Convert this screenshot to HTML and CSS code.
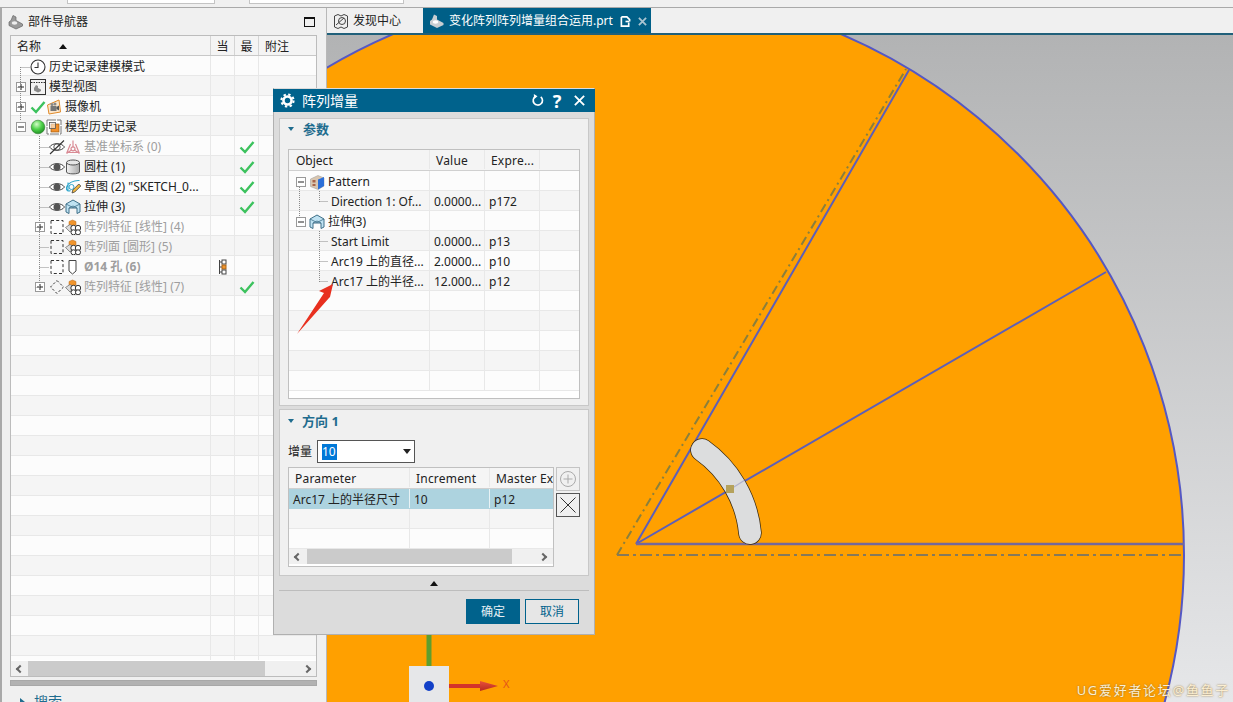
FILE: index.html
```html
<!DOCTYPE html>
<html lang="zh">
<head>
<meta charset="utf-8">
<title>阵列增量</title>
<link rel="stylesheet" href="styles.css">
</head>
<body>
<svg class="defs" width="0" height="0" aria-hidden="true">
  <symbol id="i-part" viewBox="0 0 16 16">
    <path d="M5 1.500 8 3v3.500l6.500 3.500v2L8 15 1 11.500V8l2-1.500z" fill="#9a9a9a" stroke="#666" stroke-width=".7"/>
    <ellipse cx="6.500" cy="9" rx="2.800" ry="1.800" fill="#eee"/>
  </symbol>
  <symbol id="i-clock" viewBox="0 0 16 16">
    <circle cx="8" cy="8" r="7" fill="#fff" stroke="#333" stroke-width="1.100"/>
    <path d="M8 3.500V8.500H4.500" fill="none" stroke="#333" stroke-width="1.100"/>
  </symbol>
  <symbol id="i-view" viewBox="0 0 16 16">
    <rect x=".5" y=".5" width="15" height="15" fill="#f2f2f2" stroke="#333"/>
    <path d="M1 3.500h14" stroke="#333" stroke-dasharray="1.500 1"/>
    <path d="M6 6 8 7v2l3 1.500v1.500l-3 1.500-4-2V9z" fill="#8a8a8a"/>
  </symbol>
  <symbol id="i-check" viewBox="0 0 16 16">
    <path d="M1.500 8.500 6 13 14.500 3" fill="none" stroke="#3cc25e" stroke-width="2.400"/>
  </symbol>
  <symbol id="i-camera" viewBox="0 0 16 16">
    <path d="M1.500 6 13 1l1.500 12L3 15z" fill="#fbe7cd" stroke="#e08a2a"/>
    <rect x="4.500" y="7" width="6" height="5" fill="#777"/>
    <path d="M10.500 8 13 6.500v5L10.500 10z" fill="#555"/>
    <circle cx="6" cy="5.500" r="1.500" fill="#888"/><circle cx="9" cy="5" r="1.500" fill="#888"/>
  </symbol>
  <symbol id="i-ball" viewBox="0 0 16 16">
    <defs><radialGradient id="g-ball" cx=".4" cy=".3" r=".75"><stop offset="0" stop-color="#d4fbc8"/><stop offset=".5" stop-color="#4fd24a"/><stop offset="1" stop-color="#1d8a22"/></radialGradient></defs>
    <circle cx="8" cy="8" r="6.800" fill="url(#g-ball)" stroke="#2a7a2a" stroke-width=".6"/>
  </symbol>
  <symbol id="i-group" viewBox="0 0 16 16">
    <rect x="1" y="1" width="14" height="14" fill="#fff" stroke="#777" stroke-dasharray="9 1"/>
    <rect x="5" y="5" width="8" height="8" fill="#f2902a" stroke="#9a5a12" stroke-width=".7"/>
    <rect x="3.500" y="3.500" width="6" height="6" fill="#fff" fill-opacity=".55" stroke="#555" stroke-width=".8"/>
  </symbol>
  <symbol id="i-eye" viewBox="0 0 16 16">
    <path d="M.5 8C3.500 3.500 12.500 3.500 15.500 8 12.500 12.500 3.500 12.500.5 8z" fill="#fff" stroke="#444"/>
    <circle cx="8" cy="8" r="3.500" fill="#555"/>
  </symbol>
  <symbol id="i-eye-off" viewBox="0 0 16 16">
    <path d="M.5 8C3.500 3.500 12.500 3.500 15.500 8 12.500 12.500 3.500 12.500.5 8z" fill="#fff" stroke="#444"/>
    <circle cx="8" cy="8" r="3.200" fill="none" stroke="#555"/>
    <path d="M1 15 15 1.500" stroke="#333" stroke-width="1.100"/>
  </symbol>
  <symbol id="i-csys" viewBox="0 0 16 16">
    <g fill="none" stroke="#d98a94" stroke-width="1.200">
      <path d="M8 1.500v7M6.500 11 1.500 14.500M9.500 11l5 3.500M5.500 5 2 13.500h12L10.500 5"/>
      <circle cx="8" cy="9.800" r="2"/>
    </g>
  </symbol>
  <symbol id="i-cyl" viewBox="0 0 16 16">
    <defs><linearGradient id="g-cyl" x1="0" x2="1" y1="0" y2="0"><stop offset="0" stop-color="#f3f3f3"/><stop offset="1" stop-color="#a9a9a9"/></linearGradient></defs>
    <path d="M1.500 3.500v9.500c0 2.500 13 2.500 13 0V3.500z" fill="url(#g-cyl)" stroke="#555"/>
    <ellipse cx="8" cy="3.500" rx="6.500" ry="2.500" fill="#e6e6e6" stroke="#555"/>
  </symbol>
  <symbol id="i-sketch" viewBox="0 0 16 16">
    <path d="M14.500 1.500C9 1 2.500 4 1.500 8.500c-.5 2.500 2 4.500 4 3M3 3.500v9" fill="none" stroke="#30a6cc" stroke-width="1.100"/>
    <circle cx="6.500" cy="8" r="2.500" fill="none" stroke="#30a6cc"/>
    <path d="m7 14 .8-3 6-6 2 2-6 6z" fill="#f0b640" stroke="#444" stroke-width=".8"/>
  </symbol>
  <symbol id="i-extrude" viewBox="0 0 16 16">
    <path d="M8 1 15 5v8l-3 1.500V9H4v5.500L1 13V5z" fill="#bfe2f2" stroke="#3e6f88"/>
    <path d="M1 5l7 3.500L15 5M4 9l4-2 4 2" fill="none" stroke="#3e6f88" stroke-width=".8"/>
  </symbol>
  <symbol id="i-dashed" viewBox="0 0 16 16">
    <rect x="2" y="1.500" width="12" height="13" fill="none" stroke="#333" stroke-dasharray="3 2.200"/>
  </symbol>
  <symbol id="i-dashed-c" viewBox="0 0 16 16">
    <path d="M8 1.500 14.500 8 8 14.500 1.500 8z" fill="none" stroke="#333" stroke-dasharray="2.500 2"/>
  </symbol>
  <symbol id="i-pattern" viewBox="0 0 16 16">
    <path d="M4 2.500 7.500 1 11 2.500V6L7.500 8 4 6z" fill="#f0952e" stroke="#b86a18" stroke-width=".5"/>
    <path d="M.5 8.500 5 5.500 9 8 5 13z" fill="#dcdcdc" stroke="#666" stroke-width=".7"/>
    <g fill="#fff" stroke="#333" stroke-width="1">
      <circle cx="8.500" cy="9" r="2.700"/><circle cx="13" cy="9" r="2.700"/><circle cx="8.500" cy="13.300" r="2.500"/><circle cx="13" cy="13.300" r="2.500"/>
    </g>
  </symbol>
  <symbol id="i-hole" viewBox="0 0 16 16">
    <path d="M4 1.500h7V12l-3.500 3L4 12z" fill="#fff" stroke="#444"/>
  </symbol>
  <symbol id="i-dep" viewBox="0 0 16 16">
    <path d="M4.500 1v14M4.500 3h3M4.500 8h3M4.500 13h3" fill="none" stroke="#444"/>
    <rect x="7" y="1" width="4" height="4" fill="#fff" stroke="#444"/>
    <rect x="7" y="6" width="4" height="4" fill="#f0952e" stroke="#a8641a"/>
    <rect x="7" y="11" width="4" height="4" fill="#fff" stroke="#444"/>
  </symbol>
  <symbol id="i-pat-block" viewBox="0 0 16 16">
    <path d="M1.500 5 9 1.500 15 4v8l-6 3.500-7.500-3z" fill="#d9c6b0" stroke="#999" stroke-width=".5"/>
    <path d="M9 5.500 15 3v9l-6 3.500z" fill="#2c6fd8"/>
    <path d="M3.500 6h3v2.500h-3zM3.500 10h3v2h-3z" fill="#a8644a"/>
  </symbol>
  <symbol id="i-plus" viewBox="0 0 10 10">
    <rect x=".5" y=".5" width="9" height="9" fill="#fff" stroke="#999"/>
    <path d="M2 5h6M5 2v6" stroke="#222"/>
  </symbol>
  <symbol id="i-minus" viewBox="0 0 10 10">
    <rect x=".5" y=".5" width="9" height="9" fill="#fff" stroke="#999"/>
    <path d="M2 5h6" stroke="#222"/>
  </symbol>
</svg>

<div class="app">
  <div class="top-strip">
    <div class="top-field"></div>
    <div class="top-field wide"></div>
  </div>

  <div class="work">
    <aside class="panel">
      <header class="panel-head">
        <svg class="ic-head"><use href="#i-part"/></svg>
        <span class="panel-title">部件导航器</span>
        <span class="maximize"></span>
      </header>

      <div class="nav-table">
        <svg class="tree-lines" width="60" height="300" viewBox="0 0 60 300">
          <path d="M9.500 31V85M9.500 31.500H19M9.500 51.500H6M9.500 71.500H6M28.500 100V252M28.500 111.500H38M28.500 131.500H38M28.500 151.500H38M28.500 171.500H38M28.500 191.500H24M28.500 211.500H38M28.500 231.500H38M28.500 251.500H24" fill="none" stroke="#8a8a8a" stroke-dasharray="1 1"/>
        </svg>
        <div class="nav-row nav-header">
          <div class="cell name head-cell">名称<span class="sort"></span></div>
          <div class="cell head-cell center">当</div>
          <div class="cell head-cell center">最</div>
          <div class="cell head-cell note">附注</div>
        </div>
        <div class="nav-body">
          <div class="nav-row"><div class="cell name p19"><svg class="ic"><use href="#i-clock"/></svg><span class="txt">历史记录建模模式</span></div><div class="cell"></div><div class="cell"></div><div class="cell"></div></div>
          <div class="nav-row"><div class="cell name p5"><svg class="exp"><use href="#i-plus"/></svg><svg class="ic"><use href="#i-view"/></svg><span class="txt">模型视图</span></div><div class="cell"></div><div class="cell"></div><div class="cell"></div></div>
          <div class="nav-row"><div class="cell name p5"><svg class="exp"><use href="#i-plus"/></svg><svg class="ic"><use href="#i-check"/></svg><svg class="ic"><use href="#i-camera"/></svg><span class="txt">摄像机</span></div><div class="cell"></div><div class="cell"></div><div class="cell"></div></div>
          <div class="nav-row"><div class="cell name p5"><svg class="exp"><use href="#i-minus"/></svg><svg class="ic"><use href="#i-ball"/></svg><svg class="ic"><use href="#i-group"/></svg><span class="txt">模型历史记录</span></div><div class="cell"></div><div class="cell"></div><div class="cell"></div></div>
          <div class="nav-row dim"><div class="cell name p38"><svg class="ic"><use href="#i-eye-off"/></svg><svg class="ic"><use href="#i-csys"/></svg><span class="txt">基准坐标系 (0)</span></div><div class="cell"></div><div class="cell center"><svg class="ic"><use href="#i-check"/></svg></div><div class="cell"></div></div>
          <div class="nav-row"><div class="cell name p38"><svg class="ic"><use href="#i-eye"/></svg><svg class="ic"><use href="#i-cyl"/></svg><span class="txt">圆柱 (1)</span></div><div class="cell"></div><div class="cell center"><svg class="ic"><use href="#i-check"/></svg></div><div class="cell"></div></div>
          <div class="nav-row"><div class="cell name p38"><svg class="ic"><use href="#i-eye"/></svg><svg class="ic"><use href="#i-sketch"/></svg><span class="txt">草图 (2) "SKETCH_0...</span></div><div class="cell"></div><div class="cell center"><svg class="ic"><use href="#i-check"/></svg></div><div class="cell"></div></div>
          <div class="nav-row"><div class="cell name p38"><svg class="ic"><use href="#i-eye"/></svg><svg class="ic"><use href="#i-extrude"/></svg><span class="txt">拉伸 (3)</span></div><div class="cell"></div><div class="cell center"><svg class="ic"><use href="#i-check"/></svg></div><div class="cell"></div></div>
          <div class="nav-row dim"><div class="cell name p24"><svg class="exp"><use href="#i-plus"/></svg><svg class="ic"><use href="#i-dashed"/></svg><svg class="ic"><use href="#i-pattern"/></svg><span class="txt">阵列特征 [线性] (4)</span></div><div class="cell"></div><div class="cell"></div><div class="cell"></div></div>
          <div class="nav-row dim"><div class="cell name p38"><svg class="ic"><use href="#i-dashed"/></svg><svg class="ic"><use href="#i-pattern"/></svg><span class="txt">阵列面 [圆形] (5)</span></div><div class="cell"></div><div class="cell"></div><div class="cell"></div></div>
          <div class="nav-row dim strong"><div class="cell name p38"><svg class="ic"><use href="#i-dashed"/></svg><svg class="ic"><use href="#i-hole"/></svg><span class="txt">Ø14 孔 (6)</span></div><div class="cell center"><svg class="ic"><use href="#i-dep"/></svg></div><div class="cell"></div><div class="cell"></div></div>
          <div class="nav-row dim"><div class="cell name p24"><svg class="exp"><use href="#i-plus"/></svg><svg class="ic"><use href="#i-dashed-c"/></svg><svg class="ic"><use href="#i-pattern"/></svg><span class="txt">阵列特征 [线性] (7)</span></div><div class="cell"></div><div class="cell center"><svg class="ic"><use href="#i-check"/></svg></div><div class="cell"></div></div>
          <div class="nav-row"><div class="cell name"></div><div class="cell"></div><div class="cell"></div><div class="cell"></div></div>
          <div class="nav-row"><div class="cell name"></div><div class="cell"></div><div class="cell"></div><div class="cell"></div></div>
          <div class="nav-row"><div class="cell name"></div><div class="cell"></div><div class="cell"></div><div class="cell"></div></div>
          <div class="nav-row"><div class="cell name"></div><div class="cell"></div><div class="cell"></div><div class="cell"></div></div>
          <div class="nav-row"><div class="cell name"></div><div class="cell"></div><div class="cell"></div><div class="cell"></div></div>
          <div class="nav-row"><div class="cell name"></div><div class="cell"></div><div class="cell"></div><div class="cell"></div></div>
          <div class="nav-row"><div class="cell name"></div><div class="cell"></div><div class="cell"></div><div class="cell"></div></div>
          <div class="nav-row"><div class="cell name"></div><div class="cell"></div><div class="cell"></div><div class="cell"></div></div>
          <div class="nav-row"><div class="cell name"></div><div class="cell"></div><div class="cell"></div><div class="cell"></div></div>
          <div class="nav-row"><div class="cell name"></div><div class="cell"></div><div class="cell"></div><div class="cell"></div></div>
          <div class="nav-row"><div class="cell name"></div><div class="cell"></div><div class="cell"></div><div class="cell"></div></div>
          <div class="nav-row"><div class="cell name"></div><div class="cell"></div><div class="cell"></div><div class="cell"></div></div>
          <div class="nav-row"><div class="cell name"></div><div class="cell"></div><div class="cell"></div><div class="cell"></div></div>
          <div class="nav-row"><div class="cell name"></div><div class="cell"></div><div class="cell"></div><div class="cell"></div></div>
          <div class="nav-row"><div class="cell name"></div><div class="cell"></div><div class="cell"></div><div class="cell"></div></div>
          <div class="nav-row"><div class="cell name"></div><div class="cell"></div><div class="cell"></div><div class="cell"></div></div>
          <div class="nav-row"><div class="cell name"></div><div class="cell"></div><div class="cell"></div><div class="cell"></div></div>
          <div class="nav-row"><div class="cell name"></div><div class="cell"></div><div class="cell"></div><div class="cell"></div></div>
          <div class="nav-row"><div class="cell name"></div><div class="cell"></div><div class="cell"></div><div class="cell"></div></div>
        </div>
        <div class="hscroll nav-scroll">
          <span class="arrow left"></span>
          <span class="thumb"></span>
          <span class="arrow right"></span>
        </div>
      </div>
      <div class="splitter"></div>
      <div class="search"><span class="search-tri"></span>搜索</div>
    </aside>

    <main class="main">
      <div class="tabs">
        <div class="tab">
          <svg class="ic" viewBox="0 0 16 16"><path d="M1.500 3 5 1.500 8 3l3-1.500L14.500 3v11L11 15.500 8 14l-3 1.500L1.500 14z" fill="none" stroke="#444"/><circle cx="9" cy="8" r="3.500" fill="none" stroke="#444"/><path d="M3 12 11 5" stroke="#444"/></svg>
          <span>发现中心</span>
        </div>
        <div class="tab active">
          <svg class="ic" viewBox="0 0 16 16"><path d="M5 1.500 8 3v3.500l6.500 3.500v2L8 15 1 11.500V8l2-1.500z" fill="#c8ced2"/><ellipse cx="6.500" cy="9" rx="2.800" ry="1.800" fill="#fff"/></svg>
          <span class="tab-name">变化阵列阵列增量组合运用.prt</span>
          <svg class="tab-mark" viewBox="0 0 12 12"><path d="M1.500 1h6l3 3v2M1.500 1v10h8V7" fill="none" stroke="#fff" stroke-width="1.800"/><path d="M6 6h4" stroke="#fff" stroke-width="1.800"/></svg>
          <svg class="tab-close" viewBox="0 0 10 10"><path d="M1 1l8 8M9 1 1 9" stroke="#a9c4d1" stroke-width="2"/></svg>
        </div>
      </div>
      <div class="canvas">
        <svg class="scene" viewBox="327 35 906 667" width="906" height="667">
          <defs>
            <linearGradient id="g-bg" x1="0" x2="0" y1="0" y2="1">
              <stop offset="0" stop-color="#b2b3b4"/>
              <stop offset="1" stop-color="#e6e7e9"/>
            </linearGradient>
            <linearGradient id="g-arrow" x1="0" x2="0" y1="0" y2="1">
              <stop offset="0" stop-color="#e8503a"/>
              <stop offset="1" stop-color="#b82a20"/>
            </linearGradient>
          </defs>
          <rect x="327" y="35" width="906" height="667" fill="url(#g-bg)"/>
          <circle cx="617" cy="555" r="567" fill="#ffa000" stroke="#5558c4" stroke-width="2"/>
          <path d="M636 544 909 70M636 544 1106 272" stroke="#5d5fb8" stroke-width="2" fill="none"/>
          <path d="M636 544H1184" stroke="#74689c" stroke-width="2.500" fill="none"/>
          <path d="M617 555 906 69" stroke="#8a7f3c" stroke-width="2" stroke-dasharray="9 4 2 4" fill="none"/>
          <path d="M617 555H1184" stroke="#86795a" stroke-width="2" stroke-dasharray="12 4 3 4" fill="none"/>
          <path d="M702 450A115 115 0 0 1 750 533" fill="none" stroke="#3a2a10" stroke-width="23.500" stroke-linecap="round"/>
          <path d="M702 450A115 115 0 0 1 750 533" fill="none" stroke="#dcddde" stroke-width="22" stroke-linecap="round"/>
          <path d="M726 492 745 480" stroke="#6264b4" stroke-width="1.200" opacity=".35"/>
          <rect x="726" y="485" width="8" height="8" fill="#b5a25c"/>
          <path d="M429 635V666" stroke="#5f9e2e" stroke-width="5"/>
          <rect x="409" y="666" width="40" height="38" fill="#e6e7e9"/>
          <circle cx="429" cy="686" r="5" fill="#1240c8"/>
          <path d="M449 686H482" stroke="#d4342a" stroke-width="4"/>
          <path d="M480 681 498 686 480 691z" fill="url(#g-arrow)"/>
        </svg>
        <span class="axis-x">X</span>
      </div>
    </main>
  </div>

  <section class="dialog">
    <header class="dlg-title">
      <svg class="gear" viewBox="0 0 16 16"><circle cx="8" cy="8" r="4.300" fill="none" stroke="#fff" stroke-width="2.800"/><circle cx="8" cy="8" r="6.500" fill="none" stroke="#fff" stroke-width="2.200" stroke-dasharray="2.550 2.550"/></svg>
      <span class="dlg-name">阵列增量</span>
      <svg class="dlg-btn" viewBox="0 0 14 14"><path d="M5 2.500A5 5 0 1 0 10.500 3" fill="none" stroke="#fff" stroke-width="1.800"/><path d="M3 0 7 2.500 3.500 5.500z" fill="#fff"/></svg>
      <span class="dlg-help">?</span>
      <svg class="dlg-btn x" viewBox="0 0 14 14"><path d="M2 2l10 10M12 2 2 12" stroke="#fff" stroke-width="2"/></svg>
    </header>

    <div class="group first">
      <div class="group-head"><span class="tri"></span>参数</div>
      <div class="obj-table">
        <svg class="tree-lines" width="60" height="150" viewBox="0 0 60 150">
          <path d="M10.500 37V69M30.500 41V52M30.500 51.500H39M30.500 81V132M30.500 91.500H39M30.500 111.500H39M30.500 131.500H39" fill="none" stroke="#8a8a8a" stroke-dasharray="1 1"/>
        </svg>
        <div class="obj-row head"><div class="cell hd-first">Object</div><div class="cell hd">Value</div><div class="cell hd">Expre...</div><div class="cell"></div></div>
        <div class="obj-row"><div class="cell p7"><svg class="exp sm"><use href="#i-minus"/></svg><svg class="ic"><use href="#i-pat-block"/></svg><span class="txt">Pattern</span></div><div class="cell"></div><div class="cell"></div><div class="cell"></div></div>
        <div class="obj-row"><div class="cell p42">Direction 1: Of...</div><div class="cell val">0.0000...</div><div class="cell val">p172</div><div class="cell"></div></div>
        <div class="obj-row"><div class="cell p7"><svg class="exp sm"><use href="#i-minus"/></svg><svg class="ic"><use href="#i-extrude"/></svg><span class="txt">拉伸(3)</span></div><div class="cell"></div><div class="cell"></div><div class="cell"></div></div>
        <div class="obj-row"><div class="cell p42">Start Limit</div><div class="cell val">0.0000...</div><div class="cell val">p13</div><div class="cell"></div></div>
        <div class="obj-row"><div class="cell p42">Arc19 上的直径...</div><div class="cell val">2.0000...</div><div class="cell val">p10</div><div class="cell"></div></div>
        <div class="obj-row"><div class="cell p42">Arc17 上的半径...</div><div class="cell val">12.000...</div><div class="cell val">p12</div><div class="cell"></div></div>
        <div class="obj-row"><div class="cell"></div><div class="cell"></div><div class="cell"></div><div class="cell"></div></div>
        <div class="obj-row"><div class="cell"></div><div class="cell"></div><div class="cell"></div><div class="cell"></div></div>
        <div class="obj-row"><div class="cell"></div><div class="cell"></div><div class="cell"></div><div class="cell"></div></div>
        <div class="obj-row"><div class="cell"></div><div class="cell"></div><div class="cell"></div><div class="cell"></div></div>
        <div class="obj-row"><div class="cell"></div><div class="cell"></div><div class="cell"></div><div class="cell"></div></div>
      </div>
    </div>

    <div class="group second">
      <div class="group-head"><span class="tri"></span>方向 1</div>
      <div class="field">
        <label class="field-label">增量</label>
        <div class="select"><span class="sel-text">10</span><span class="caret"></span></div>
      </div>
      <div class="param-wrap">
        <div class="param-table">
          <div class="param-row head"><div class="cell hd">Parameter</div><div class="cell hd">Increment</div><div class="cell hd">Master Ex</div></div>
          <div class="param-row selected"><div class="cell val">Arc17 上的半径尺寸</div><div class="cell val">10</div><div class="cell val">p12</div></div>
          <div class="param-row"><div class="cell"></div><div class="cell"></div><div class="cell"></div></div>
          <div class="param-row"><div class="cell"></div><div class="cell"></div><div class="cell"></div></div>
          <div class="hscroll param-scroll">
            <span class="arrow left"></span>
            <span class="thumb"></span>
            <span class="arrow right"></span>
          </div>
        </div>
        <div class="side-btns">
          <button class="side-btn off"><svg viewBox="0 0 18 18"><circle cx="9" cy="9" r="7.500" fill="none" stroke="#aaa"/><path d="M4.500 9h9M9 4.500v9" stroke="#aaa"/></svg></button>
          <button class="side-btn"><svg viewBox="0 0 18 18"><path d="M1.500 1.500l15 15M16.500 1.500l-15 15" stroke="#333"/></svg></button>
        </div>
      </div>
    </div>

    <div class="collapse"><span class="collapse-tri"></span></div>
    <footer class="dlg-foot">
      <button class="btn primary">确定</button>
      <button class="btn">取消</button>
    </footer>

    <svg class="callout" width="50" height="60" viewBox="290 280 50 60"><path d="M332 284 318 291 323 293 296 334 328 298 329 297z" fill="#e8301f"/></svg>
  </section>

  <div class="watermark">UG爱好者论坛@鱼鱼子</div>
</div>
</body>
</html>
```

FILE: styles.css
```css
* { box-sizing: border-box; }
html, body { margin: 0; padding: 0; }
body {
  width: 1233px;
  height: 702px;
  overflow: hidden;
  background: #f0f0f0;
  color: #222;
  font: 12px/20px "Noto Sans", "Noto Sans CJK SC", sans-serif;
}
.defs { position: absolute; }
svg { display: block; flex: none; }

.app { position: relative; display: flex; flex-direction: column; width: 1233px; height: 702px; overflow: hidden; }

.top-strip {
  display: flex;
  flex: none;
  height: 8px;
  gap: 34px;
  padding-left: 67px;
  border-bottom: 1px solid #a9a9a9;
  background: #f0f0f0;
}
.top-field { width: 148px; height: 5px; margin-top: -1px; background: #fff; border: 1px solid #c4c4c4; }
.top-field.wide { width: 155px; }

.work { display: flex; flex: 1; min-height: 0; }

/* navigator */
.panel {
  display: flex;
  flex-direction: column;
  flex: none;
  width: 327px;
  padding: 0 9px 0 8px;
  border-left: 2px solid #a9a9a9;
  border-right: 1px solid #b8b8b8;
  background: #f0f0f0;
}
.panel-head { display: flex; align-items: center; flex: none; height: 27px; margin-left: -2px; padding-top: 1px; }
.ic-head { width: 16px; height: 16px; margin-right: 4px; }
.panel-title { flex: 1; }
.maximize { width: 11px; height: 10px; margin-right: 2px; border: 1px solid #111; border-top-width: 2px; }

.nav-table {
  position: relative;
  display: flex;
  flex-direction: column;
  flex: none;
  width: 307px;
  height: 642px;
  border: 1px solid #bcbcbc;
  background: #fff;
}
.tree-lines { position: absolute; left: 0; top: 0; z-index: 1; pointer-events: none; }

.nav-row {
  display: grid;
  flex: none;
  grid-template-columns: 200px 24px 24px 1fr;
  height: 20px;
  border-bottom: 1px solid #e8e8e8;
}
.nav-header { height: 20px; border-bottom: 1px solid #c8c8c8; background: #f4f4f4; }
.nav-body { flex: 1; min-height: 0; overflow: hidden; }
.nav-body .nav-row:nth-child(odd) { background: #fcfcfc; }
.nav-body .nav-row:nth-child(even) { background: #f5f5f5; }

.cell {
  display: flex;
  align-items: center;
  min-width: 0;
  height: 19px;
  padding-top: 2px;
  overflow: hidden;
  line-height: 17px;
  white-space: nowrap;
  border-right: 1px solid #e8e8e8;
}
.cell:last-child { border-right: 0; }
.head-cell { border-right-color: #d4d4d4; }
.name.head-cell { padding-left: 6px; }
.note { padding-left: 6px; }
.center { justify-content: center; }
.sort { width: 0; height: 0; margin-left: 18px; border: 4.500px solid transparent; border-top: 0; border-bottom: 5px solid #111; }
.ic { width: 16px; height: 16px; }
.exp { width: 10px; height: 10px; margin-right: 4px; }
.exp.sm { margin-right: 3px; }
.txt { margin-left: 3px; }
.p5 { padding-left: 5px; }
.p7 { padding-left: 7px; }
.p19 { padding-left: 19px; }
.p24 { padding-left: 24px; }
.p38 { padding-left: 38px; }
.p42 { padding-left: 42px; }
.dim { color: #9e9e9e; }
.strong .txt { font-weight: 700; }

.hscroll { display: flex; align-items: center; flex: none; background: #f0f0f0; }
.nav-scroll { height: 15px; margin-top: 1px; }
.nav-scroll .arrow.left { margin: 0 5px 0 6px; }
.nav-scroll .thumb { width: 237px; height: 15px; background: #cbcbcb; }
.nav-scroll .arrow.right { margin-left: auto; margin-right: 6px; }
.thumb { display: block; flex: none; }
.arrow { display: block; flex: none; width: 6px; height: 6px; border-left: 2px solid #666; border-bottom: 2px solid #666; }
.arrow.left { transform: rotate(45deg); }
.arrow.right { transform: rotate(225deg); }

.splitter { flex: none; width: 307px; height: 6px; margin-top: 3px; background: #b2b2b2; border: 1px solid #a8a8a8; }
.search { display: flex; align-items: center; flex: none; margin-top: 6px; padding-left: 10px; font-size: 14px; color: #1f6c8e; }
.search-tri { width: 0; height: 0; margin-right: 9px; border: 4px solid transparent; border-right: 0; border-left: 5px solid #1f6c8e; }

/* main area */
.main { display: flex; flex-direction: column; flex: 1; min-width: 0; }
.tabs { display: flex; flex: none; height: 27px; border-bottom: 2px solid #20607a; background: #f0f0f0; }
.tab { display: flex; align-items: center; gap: 4px; width: 96px; padding: 1px 0 0 6px; }
.tab.active { gap: 0; width: 228px; padding-left: 6px; color: #fff; background: #005f87; }
.tab-name { margin-left: 4px; }
.tab-mark { width: 11px; height: 11px; margin-left: 7px; }
.tab-close { width: 9px; height: 9px; margin-left: 7px; }
.canvas { position: relative; flex: 1; min-height: 0; overflow: hidden; }
.axis-x { position: absolute; left: 176px; top: 642px; font-size: 11px; line-height: 14px; color: #e4551a; }

/* dialog */
.dialog {
  position: absolute;
  left: 273px;
  top: 88px;
  display: flex;
  flex-direction: column;
  width: 322px;
  height: 547px;
  padding-top: 1px;
  background: #dcdcdc;
  border: 1px solid #b0b0b0;
  border-top: 0;
}
.dlg-title { display: flex; align-items: center; flex: none; height: 23px; margin: 0 -1px; padding: 0 9px 0 7px; color: #fff; background: #00628c; }
.gear { width: 15px; height: 15px; margin-right: 7px; }
.dlg-name { flex: 1; font-size: 14px; }
.dlg-btn { width: 13px; height: 13px; }
.dlg-btn.x { margin-left: 11px; }
.dlg-help { width: 10px; margin-left: 8px; font-size: 18px; font-weight: 700; line-height: 20px; text-align: center; }

.group { flex: none; margin: 0 5px; background: #f0f0f0; border: 1px solid #c8c8c8; }
.group.first { height: 288px; margin-top: 6px; }
.group.second { height: 167px; margin-top: 3px; }
.group-head { display: flex; align-items: center; height: 30px; padding-left: 8px; font-size: 13px; font-weight: 700; color: #1f6c8e; }
.first .group-head { padding-bottom: 10px; }
.second .group-head { padding-bottom: 8px; }
.tri { width: 0; height: 0; margin-right: 9px; border: 3.500px solid transparent; border-bottom: 0; border-top: 4px solid #1f6c8e; }
.second .tri { margin-right: 8px; }

.obj-table { position: relative; width: 292px; height: 250px; margin-left: 8px; overflow: hidden; background: #fff; border: 1px solid #c0c0c0; }
.obj-row { display: grid; grid-template-columns: 141px 55px 55px 1fr; height: 20px; border-bottom: 1px solid #e8e8e8; }
.obj-row:nth-child(even) { background: #f5f5f5; }
.obj-row:nth-child(odd) { background: #fcfcfc; }
.obj-row.head, .param-row.head { height: 21px; background: #f4f4f4; border-bottom-color: #d0d0d0; }
.hd-first { padding-left: 7px; }
.hd { padding-left: 6px; letter-spacing: .2px; }
.val { padding-left: 4px; }

.field { display: flex; align-items: center; height: 23px; padding-left: 8px; }
.field-label { width: 29px; }
.select { display: flex; align-items: center; justify-content: space-between; width: 98px; height: 23px; padding: 0 3px 0 4px; background: #fff; border: 1px solid #555; }
.sel-text { width: 15px; height: 16px; line-height: 16px; color: #fff; background: #0078d7; }
.caret { width: 0; height: 0; border: 4px solid transparent; border-bottom: 0; border-top: 5px solid #222; }

.param-wrap { display: flex; gap: 2px; margin: 4px 0 0 8px; }
.param-table { width: 266px; height: 100px; overflow: hidden; background: #fff; border: 1px solid #c0c0c0; }
.param-row { display: grid; grid-template-columns: 121px 80px 1fr; height: 20px; border-bottom: 1px solid #e8e8e8; }
.param-row:nth-child(odd) { background: #f5f5f5; }
.param-row:nth-child(even) { background: #fcfcfc; }
.param-row.selected { background: #add3df; border-bottom-color: #add3df; }
.param-row.selected .cell { border-right-color: #e8f2f5; }
.param-scroll { height: 15px; background: #f0f0f0; }
.param-scroll .arrow.left { margin: 0 6px 0 6px; }
.param-scroll .thumb { width: 205px; height: 15px; background: #cbcbcb; }
.param-scroll .arrow.right { margin-left: auto; margin-right: 7px; }

.side-btns { display: flex; flex-direction: column; gap: 2px; }
.side-btn { display: flex; align-items: center; justify-content: center; width: 24px; height: 24px; padding: 0; background: #f0f0f0; border: 1px solid #555; }
.side-btn.off { border-color: #c4c4c4; }
.side-btn svg { width: 18px; height: 18px; }

.collapse { display: flex; align-items: center; justify-content: center; flex: none; height: 15px; margin: 0 5px; border-bottom: 1px solid #bdbdbd; padding-top: 1px; }
.collapse-tri { width: 0; height: 0; border: 4.500px solid transparent; border-top: 0; border-bottom: 5px solid #111; }
.dlg-foot { display: flex; justify-content: flex-end; gap: 5px; margin-top: 8px; padding-right: 15px; }
.btn { width: 54px; height: 25px; padding: 0; font: inherit; color: #00628c; background: #e6e6e6; border: 1px solid #00628c; }
.btn.primary { color: #e6f0f5; background: #00628c; }

.callout { position: absolute; left: 17px; top: 192px; }

.watermark {
  position: absolute;
  right: 3px;
  bottom: 2px;
  font-size: 13px;
  line-height: 20px;
  letter-spacing: 1.7px;
  color: #fbeed2;
  text-shadow: 0 0 2px #8a6a30;
}
```
